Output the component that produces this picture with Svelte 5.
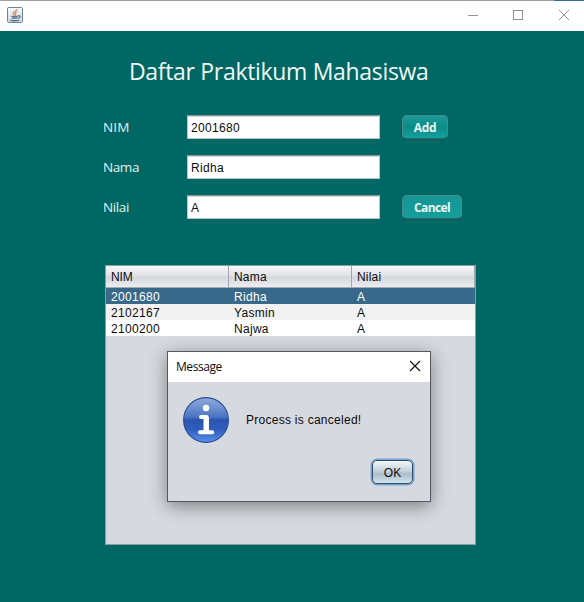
<script>
  let fields = $state([
    { label: 'NIM', value: '2001680', button: 'Add', sp: 0.33 },
    { label: 'Nama', value: 'Ridha', button: '', sp: 0.3 },
    { label: 'Nilai', value: 'A', button: 'Cancel', sp: 0 }
  ]);
  const columns = ['NIM', 'Nama', 'Nilai'];
  const rows = [
    ['2001680', 'Ridha', 'A'],
    ['2102167', 'Yasmin', 'A'],
    ['2100200', 'Najwa', 'A']
  ];
</script>

<div class="window">
  <header class="titlebar">
    <svg class="java" width="16" height="16" viewBox="0 0 16 16">
      <defs>
        <linearGradient id="jg" x1="0" y1="0" x2="0" y2="1">
          <stop offset="0" stop-color="#f8fafc" />
          <stop offset="1" stop-color="#cbd5df" />
        </linearGradient>
      </defs>
      <rect x=".5" y=".5" width="15" height="15" rx="1.2" fill="url(#jg)" stroke="#6d8598" />
      <path d="M10.2 2C10 4 6.1 4.2 6.2 6.1c.1.9.9 1.2 1.2 2.2M10.3 4.5C8.2 5.3 8 6 8.6 6.8c.3.5 0 1-.5 1.5" fill="none" stroke="#df8a3c" stroke-width="1.2" />
      <path d="M4.3 9.3h6.6M5 11h5.4M11 8.7c2.8-.7 2.7 2 .1 2.4M3.2 13.2c2.5.6 6.5.6 9 0" fill="none" stroke="#5b788f" stroke-width="1.3" />
    </svg>
    <svg class="controls" width="102" height="12" viewBox="0 0 102 12" fill="none" stroke="#929292">
      <path d="M0 5.5h10" />
      <rect x="45.5" y=".5" width="9" height="9" />
      <path d="M91 0l10 10M101 0L91 10" />
    </svg>
  </header>

  <main>
    <h1>Daftar Praktikum Mahasiswa</h1>

    <form>
      {#each fields as field}
        <div class="row">
          <label for={field.label} class:tight={field.label !== 'NIM'}>{field.label}</label>
          <input id={field.label} bind:value={field.value} style="letter-spacing: {field.sp}px" />
          {#if field.button}
            <button type="button" class="teal" class:wide={field.button === 'Cancel'}>{field.button}</button>
          {/if}
        </div>
      {/each}
    </form>

    <section class="grid">
      <div class="head">
        {#each columns as c}<span>{c}</span>{/each}
      </div>
      {#each rows as r, i}
        <div class="line" class:selected={i === 0} class:odd={i === 1}>
          {#each r as cell, j}<span class:num={j === 0}>{cell}</span>{/each}
        </div>
      {/each}
    </section>
  </main>

  <div class="dialog">
    <div class="caption">
      <span>Message</span>
      <svg width="12" height="12" viewBox="0 0 12 12" stroke="#111" stroke-width="1.1"><path d="M1 1l10 10M11 1L1 11" /></svg>
    </div>
    <div class="body">
      <svg width="46" height="46" viewBox="0 0 46 46">
        <defs>
          <linearGradient id="ig" x1="0" y1="0" x2="0" y2="1">
            <stop offset="0" stop-color="#91acdc" />
            <stop offset=".43" stop-color="#4b75c3" />
            <stop offset=".5" stop-color="#2954b0" />
            <stop offset=".72" stop-color="#315fbf" />
            <stop offset="1" stop-color="#5b8fe8" />
          </linearGradient>
        </defs>
        <circle cx="23" cy="23" r="22.4" fill="url(#ig)" stroke="#264a92" stroke-width="1.1" />
        <circle cx="23" cy="11" r="3.2" fill="#fff" />
        <path d="M18 20h5.6v15M17 35.2h12.2" fill="none" stroke="#fff" stroke-width="4" stroke-linecap="round" stroke-linejoin="round" />
        <path d="M23.2 20v15" stroke="#fff" stroke-width="5.4" />
      </svg>
      <p>Process is canceled!</p>
    </div>
    <div class="actions"><button type="button" class="ok">OK</button></div>
  </div>
</div>

<style>
  :global(body) { margin: 0; }
  * { box-sizing: border-box; }
  .window {
    position: relative;
    width: 584px;
    height: 602px;
    overflow: hidden;
    background: #006764;
    font: 12px/16px "Liberation Sans", Arial, sans-serif;
    color: #0c0c0c;
  }
  .titlebar {
    display: flex;
    justify-content: space-between;
    height: 31px;
    padding: 7px 14px 0 7px;
    background: linear-gradient(90deg, #a29fa1 554px, #2f6b9f 554px) top / 100% 1px no-repeat #fff;
  }
  .controls { margin: 3px 0 0; }
  h1 {
    margin: 0 0 0 129px;
    padding-top: 24px;
    height: 84px;
    font: 400 23px/32px "Open Sans", "Noto Sans", sans-serif;
    letter-spacing: -.32px;
    color: #f0f8f6;
    white-space: nowrap;
  }
  form { display: flex; flex-direction: column; gap: 16px; padding-left: 103px; }
  .row { display: flex; height: 24px; }
  label {
    width: 84px;
    font: 13.5px/24px "Open Sans", "Noto Sans", sans-serif;
    letter-spacing: .2px;
    color: #e3f2ee;
  }
  label.tight { letter-spacing: -.4px; }
  input {
    width: 193px;
    height: 24px;
    padding: 2px 3px 0;
    border: 1px solid #b9c2c6;
    border-top-color: #8d9599;
    border-radius: 0;
    outline: 0;
    background: #fff;
    box-shadow: inset 0 1px #d4d7d9;
    font: 12px "Liberation Sans", Arial, sans-serif;
    color: #0c0c0c;
  }
  .teal {
    width: 46px;
    height: 24px;
    margin-left: 22px;
    padding: 1px 0 0;
    border: 1px solid #4b8a8b;
    border-bottom-color: #335f62;
    border-radius: 5px;
    background: linear-gradient(#1b9c99, #0c8b88 50%, #12a09c);
    font: 700 12px/21px "Open Sans", "Noto Sans", sans-serif;
    letter-spacing: -.4px;
    color: #e9f7f5;
  }
  .teal.wide { width: 60px; letter-spacing: -.6px; background: linear-gradient(#159592, #169f9c); }
  .grid {
    width: 371px;
    height: 280px;
    margin: 46px 0 0 105px;
    border: 1px solid #8a9ba2;
    background: #d6d9df;
  }
  .head, .line { display: grid; grid-template-columns: repeat(3, 123px); }
  .head {
    height: 22px;
    border-bottom: 1px solid #a5a8ae;
    background: linear-gradient(#f7f7f9, #e0e2e7 45%, #d5d7dd 55%, #eceef2);
  }
  .head span { padding-left: 5px; line-height: 22px; border-right: 1px solid #a1a5ac; letter-spacing: .2px; }
  .head span:first-child { letter-spacing: -.1px; }
  .line { height: 16px; background: #fff; }
  .line span { padding-left: 5px; line-height: 18px; letter-spacing: .3px; }
  .line .num { letter-spacing: .33px; }
  .line.odd { background: #f2f2f2; }
  .line.selected { background: #39698a; color: #fff; }
  .dialog {
    position: absolute;
    left: 167px;
    top: 351px;
    width: 264px;
    height: 151px;
    border: 1px solid #55595e;
    background: #d6d9df;
    box-shadow: 0 4px 17px rgba(0, 0, 0, .42);
  }
  .caption {
    display: flex;
    justify-content: space-between;
    height: 30px;
    padding: 8px 9px 0 8px;
    background: #fff;
    font: 12px/14px "Open Sans", "Noto Sans", sans-serif;
    letter-spacing: -.45px;
  }
  .body { display: flex; align-items: center; gap: 17px; height: 46px; margin: 15px 0 0 15px; }
  .body p { margin: 0; letter-spacing: .27px; }
  .actions { display: flex; justify-content: flex-end; padding: 17px 17px 0 0; }
  .ok {
    width: 41px;
    height: 24px;
    padding: 1px 0 0;
    border: 1px solid #2d4d6b;
    border-radius: 5px;
    background: linear-gradient(#f3f7fa, #c5d2dc 45%, #acbecb 60%, #d3e3ee);
    box-shadow: 0 0 0 1.5px #78a5ca;
    font: 12px "Liberation Sans", Arial, sans-serif;
    color: #0c0c0c;
  }
</style>
